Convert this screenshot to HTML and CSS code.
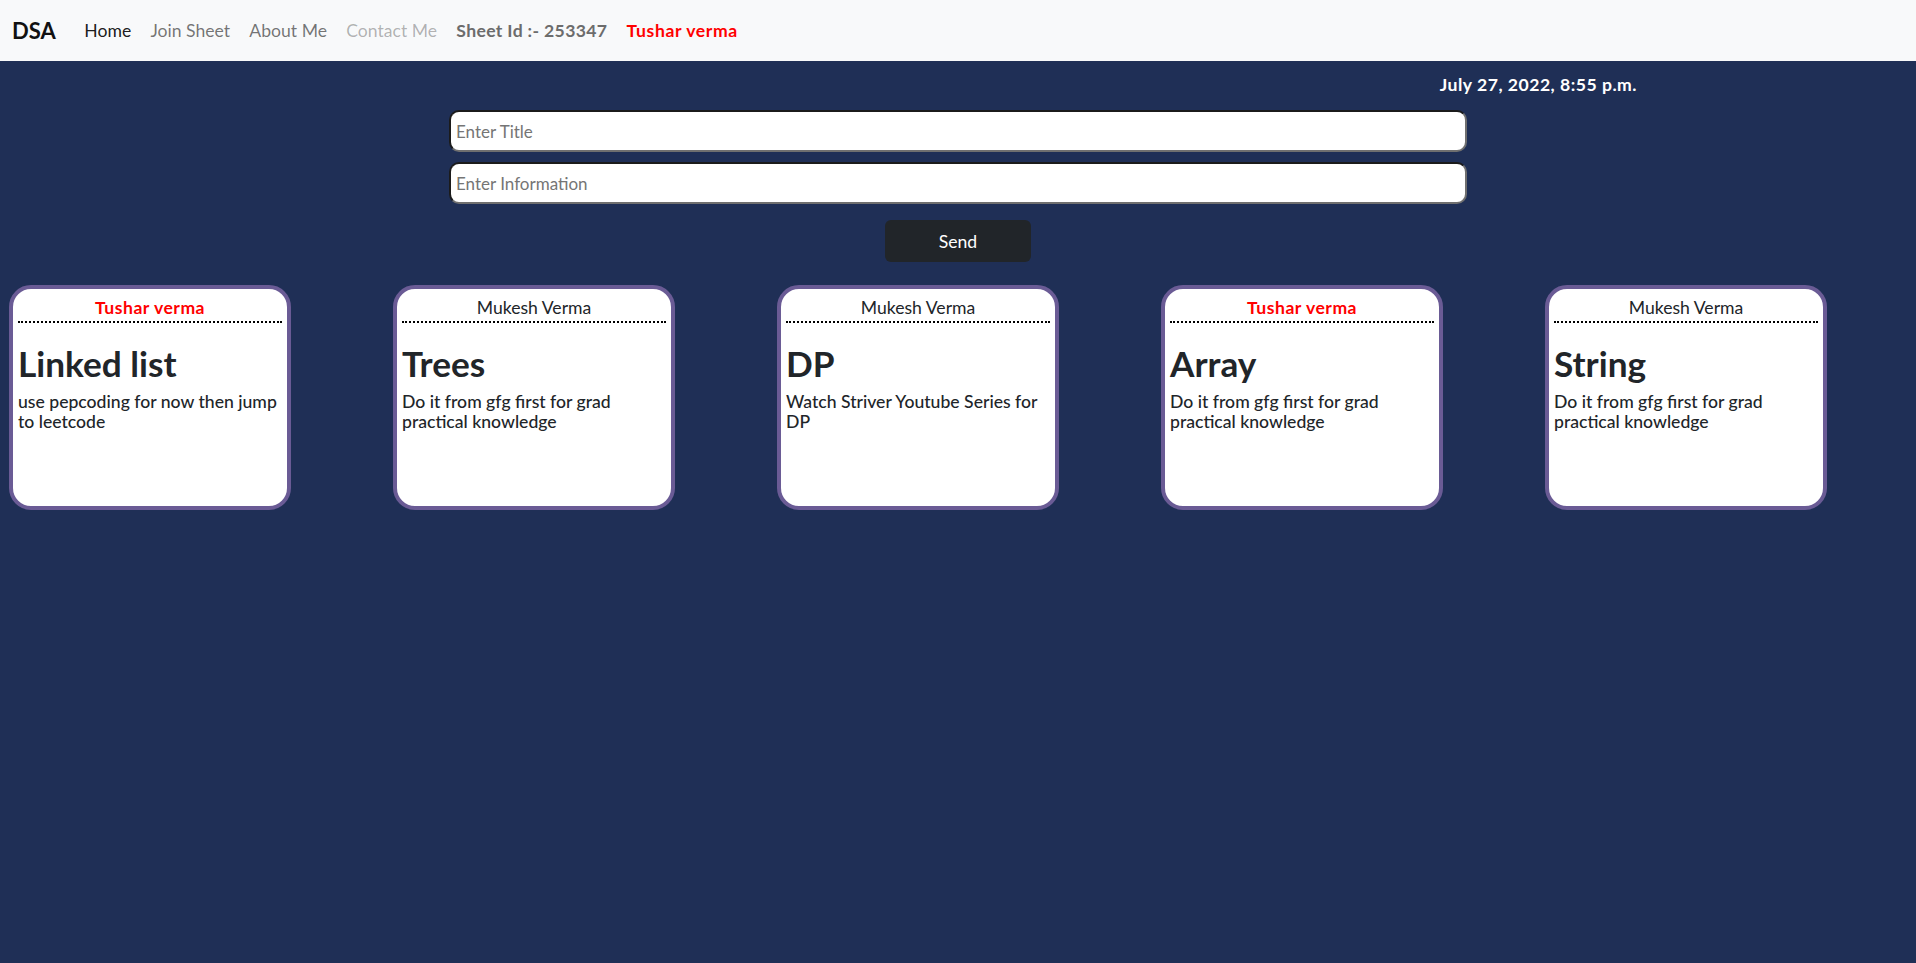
FILE: index.html
```html
<!DOCTYPE html>
<html lang="en">
<head>
<meta charset="utf-8">
<title>DSA</title>
<link rel="stylesheet" href="styles.css">
</head>
<body>
<nav class="navbar">
  <span class="brand">DSA</span>
  <ul class="nav">
    <li><a class="nav-link active" href="#">Home</a></li>
    <li><a class="nav-link" href="#">Join Sheet</a></li>
    <li><a class="nav-link" href="#">About Me</a></li>
    <li><a class="nav-link disabled" href="#">Contact Me</a></li>
    <li><span class="nav-link sheet-id">Sheet Id :- 253347</span></li>
    <li><span class="nav-link user">Tushar verma</span></li>
  </ul>
</nav>
<main>
  <div class="date-row"><span class="date">July 27, 2022, 8:55 p.m.</span></div>
  <form class="note-form">
    <input class="field" type="text" placeholder="Enter Title">
    <input class="field" type="text" placeholder="Enter Information">
    <button class="send" type="button">Send</button>
  </form>
  <div class="cards">
    <div class="card">
      <div class="author own">Tushar verma</div>
      <h2 class="title">Linked list</h2>
      <h6 class="desc">use pepcoding for now then jump to leetcode</h6>
    </div>
    <div class="card">
      <div class="author">Mukesh Verma</div>
      <h2 class="title">Trees</h2>
      <h6 class="desc">Do it from gfg first for grad practical knowledge</h6>
    </div>
    <div class="card">
      <div class="author">Mukesh Verma</div>
      <h2 class="title">DP</h2>
      <h6 class="desc">Watch Striver Youtube Series for DP</h6>
    </div>
    <div class="card">
      <div class="author own">Tushar verma</div>
      <h2 class="title">Array</h2>
      <h6 class="desc">Do it from gfg first for grad practical knowledge</h6>
    </div>
    <div class="card">
      <div class="author">Mukesh Verma</div>
      <h2 class="title">String</h2>
      <h6 class="desc">Do it from gfg first for grad practical knowledge</h6>
    </div>
  </div>
</main>
</body>
</html>
```
FILE: styles.css
```css
* { box-sizing: border-box; }
html, body { margin: 0; padding: 0; }
body {
  background: #1f2f56;
  font-family: Lato, "Noto Sans", "Liberation Sans", sans-serif;
  font-size: 17.6px;
  color: #212529;
  min-height: 963px;
}
.navbar {
  background: #f8f9fa;
  height: 61px;
  display: flex;
  align-items: center;
  padding: 0 12px;
}
.brand {
  font-weight: 700;
  font-size: 22px;
  color: #111;
  margin-right: 19px;
}
.nav {
  list-style: none;
  margin: 0;
  padding: 0;
  display: flex;
  align-items: center;
}
.nav-link {
  display: block;
  padding: 8px 9.6px;
  text-decoration: none;
  color: rgba(0,0,0,.55);
  font-size: 17.6px;
}
.nav-link.active { color: rgba(0,0,0,.9); }
.nav-link.disabled { color: rgba(0,0,0,.3); }
.nav-link.sheet-id { font-weight: 700; color: #6c6c6c; letter-spacing: 0.35px; }
.nav-link.user { font-weight: 700; color: #ff0000; letter-spacing: 0.6px; }

main { display: block; }
.date-row {
  display: flex;
  justify-content: flex-end;
  padding-right: 279px;
  margin-top: 11px;
}
.date {
  color: #fff;
  font-weight: 700;
  font-size: 17.6px;
  line-height: 26px;
  letter-spacing: 0.5px;
}
.note-form {
  display: flex;
  flex-direction: column;
  align-items: center;
  gap: 10px;
  margin: 12px 0 0;
}
.field {
  width: 1018px;
  height: 42px;
  border-style: solid;
  border-width: 2px;
  border-color: #1b1b1b #6f6f6f #6f6f6f #1b1b1b;
  border-radius: 10px;
  background: #fff;
  padding: 0 5px;
  font-family: inherit;
  font-size: 17px;
  color: #212529;
}
.field::placeholder { color: #757575; }
.send {
  margin-top: 6px;
  width: 146px;
  height: 42px;
  background: #212529;
  color: #fff;
  border: none;
  border-radius: 6px;
  font-family: inherit;
  font-size: 17.6px;
}
.cards {
  display: flex;
  gap: 102px;
  padding-left: 9px;
  margin-top: 23px;
}
.card {
  width: 282px;
  height: 225px;
  background: #fff;
  border: 4px solid #6a5b95;
  border-radius: 22px;
  padding: 6px 5px 0;
}
.author {
  text-align: center;
  font-size: 17.6px;
  line-height: 26.4px;
  border-bottom: 2px dotted #000;
  color: #212529;
}
.author.own { color: #ff0000; font-weight: 700; letter-spacing: 0.5px; }
.title {
  margin: 19px 0 8px;
  font-size: 35.2px;
  line-height: 42px;
  font-weight: 700;
  color: #212529;
}
.desc {
  margin: 0;
  font-size: 17.6px;
  line-height: 20px;
  font-weight: 500;
  color: #212529;
}
```
